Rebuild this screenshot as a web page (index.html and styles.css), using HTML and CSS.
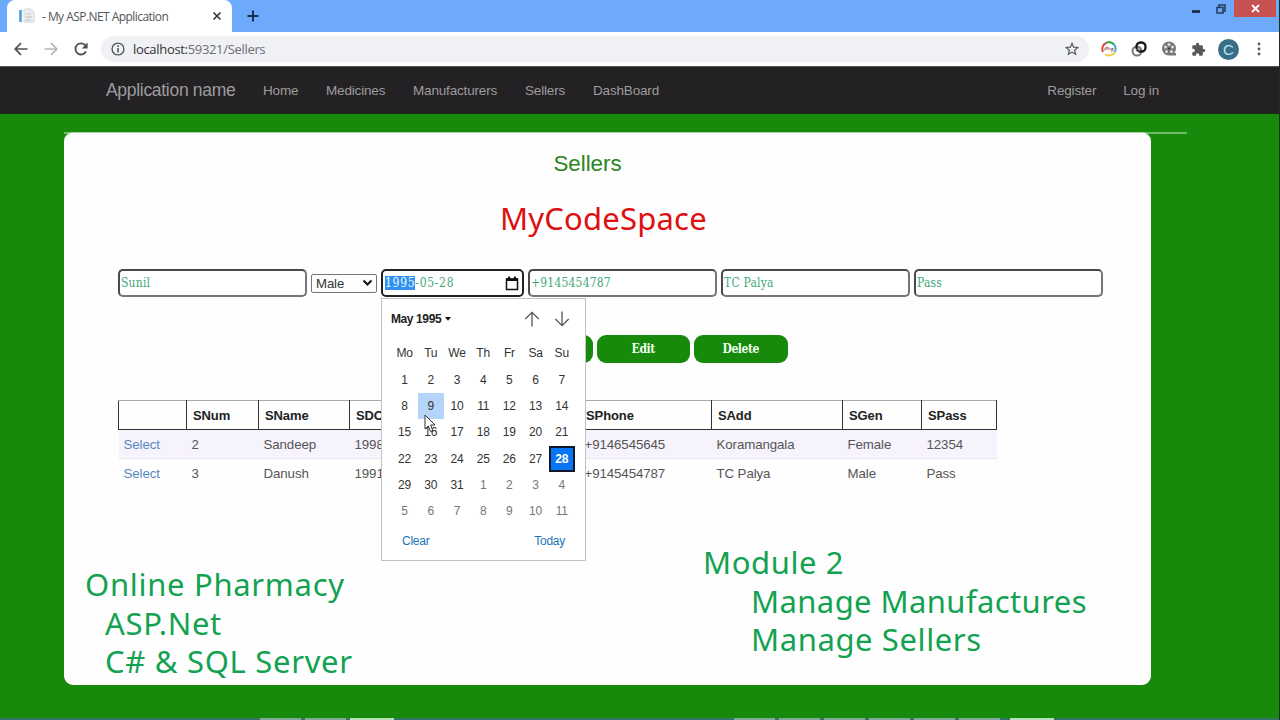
FILE: index.html
```html
<!DOCTYPE html>
<html lang="en">
	<head>
		<meta charset="UTF-8" />
		<title> - My ASP.NET Application</title>
		<link rel="stylesheet" href="styles.css">
	</head>
	<body>
		<div class="tabstrip">
			<div class="tab">
				<svg class="favicon" width="16" height="16" viewBox="0 0 16 16">
					<path d="M1.5 2v12" stroke="#3f9fd0" stroke-width="2.5" />
					<path d="M6 1h6l3 3v10H5V1" fill="#eceff1" stroke="#cfd6da" />
					<path d="M7 6h5M7 9h6M7 12h5" stroke="#b9c1c6" />
				</svg>
				<span class="tabtitle">- My ASP.NET Application</span>
				<svg width="10" height="10" viewBox="0 0 10 10"><path d="M1.5 1.5l7 7M8.5 1.5l-7 7" stroke="#333" stroke-width="1.6" /></svg>
			</div>
			<svg class="newtab" width="12" height="12" viewBox="0 0 12 12"><path d="M6 .5v11M.5 6h11" stroke="#1c2e45" stroke-width="2" /></svg>
			<div class="winbuttons">
				<svg class="winmin" width="8" height="3" viewBox="0 0 8 3"><path d="M0 1.5h8" stroke="#14263c" stroke-width="2.6" /></svg>
				<svg class="winmax" width="10" height="10" viewBox="0 0 10 10" fill="none" stroke="#243a58" stroke-width="1.5"><path d="M1 3.5h6v5.5H1zM3 3V1h6v6H7.500" /></svg>
				<div class="winclose"><svg width="9" height="9" viewBox="0 0 9 9"><path d="M1 1l7 7M8 1L1 8" stroke="#fff" stroke-width="1.8" /></svg></div>
			</div>
		</div>

		<div class="toolbar">
			<svg class="back" width="14" height="14" viewBox="0 0 14 14" fill="none" stroke="#4e5054" stroke-width="1.7"><path d="M13.500 7H1.500M7 1.200L1.200 7 7 12.800" /></svg>
			<svg class="forward" width="14" height="14" viewBox="0 0 14 14" fill="none" stroke="#b5b6b8" stroke-width="1.7"><path d="M.5 7h12M7 1.200L12.800 7 7 12.800" /></svg>
			<svg class="reload" width="14" height="14" viewBox="0 0 14 14"><path d="M12 9.500A5.600 5.600 0 1 1 11.500 3.500" fill="none" stroke="#4e5054" stroke-width="1.8" /><path d="M13.600.5v6H7.800z" fill="#4e5054" /></svg>
			<div class="address">
				<svg width="14" height="14" viewBox="0 0 14 14" fill="none" stroke="#55585c"><circle cx="7" cy="7" r="5.900" stroke-width="1.400" /><path d="M7 6v4.500M7 3.300v1.600" stroke-width="1.600" /></svg>
				<span class="url">localhost:<span>59321/Sellers</span></span>
				<svg width="14" height="14" viewBox="0 0 14 14"><path d="M7 1.300l1.600 3.900 4.200.3-3.200 2.700 1 4.100L7 10.100l-3.600 2.200 1-4.100L1.200 5.500l4.200-.3z" fill="none" stroke="#55585c" stroke-width="1.200" /></svg>
			</div>
			<div class="extensions">
				<svg width="16" height="16" viewBox="0 0 16 16" fill="none" stroke-width="2">
					<path d="M2 11A6.700 6.700 0 0 1 5 2" stroke="#df4545" />
					<path d="M5 2a6.700 6.700 0 0 1 8 1.500" stroke="#36a558" />
					<path d="M13 3.500a6.700 6.700 0 0 1 .8 7.500" stroke="#45a9e2" />
					<path d="M13.800 11A6.700 6.700 0 0 1 4 13.300" stroke="#f4cf42" />
					<path d="M4 9.500V7q1.500-1 2 0v2M6 7q2-1 2 0v2M10 7v2l2-2v2.500l-2 1" stroke="#a46568" stroke-width="1" />
				</svg>
				<svg width="16" height="16" viewBox="0 0 16 16" fill="none">
					<circle cx="6" cy="10" r="4.500" stroke="#77797c" stroke-width="2" />
					<rect x="5.500" y="1.500" width="9" height="9" rx="4" stroke="#151515" stroke-width="2.300" />
					<circle cx="7" cy="9" r="1.500" stroke="#777" />
				</svg>
				<svg width="16" height="16" viewBox="0 0 16 16">
					<circle cx="8" cy="7.500" r="7" fill="#777" />
					<path d="M9 12h6v2.500H9z" fill="#777" />
					<g fill="#dcdcdc"><circle cx="8" cy="3.500" r="1.500" /><circle cx="4.500" cy="6" r="1.500" /><circle cx="5.500" cy="10.500" r="1.500" /><circle cx="10.500" cy="10.500" r="1.500" /><circle cx="11.500" cy="6" r="1.500" /></g>
					<circle cx="8" cy="7.500" r="1" fill="#333" />
				</svg>
				<svg width="15" height="15" viewBox="0 0 24 24"><path d="M20.500 11H19V7a2 2 0 0 0-2-2h-4V3.500a2.500 2.500 0 0 0-5 0V5H4a2 2 0 0 0-2 2v3.800h1.500a2.700 2.700 0 0 1 0 5.400H2V20a2 2 0 0 0 2 2h3.800v-1.500a2.700 2.700 0 0 1 5.400 0V22H17a2 2 0 0 0 2-2v-4h1.500a2.500 2.500 0 0 0 0-5z" fill="#55585c" /></svg>
				<div class="avatar">C</div>
				<svg class="dots" width="4" height="14" viewBox="0 0 4 14" fill="#55585c"><circle cx="2" cy="2" r="1.400" /><circle cx="2" cy="7" r="1.400" /><circle cx="2" cy="12" r="1.400" /></svg>
			</div>
		</div>

		<div class="navbar">
			<a class="brand">Application name</a>
			<a class="home">Home</a>
			<a class="medicines">Medicines</a>
			<a class="manufacturers">Manufacturers</a>
			<a class="sellers">Sellers</a>
			<a class="dashboard">DashBoard</a>
			<a class="register">Register</a>
			<a class="login">Log in</a>
		</div>

		<div class="page">
			<hr class="rule">
			<div class="card">
				<h1 class="heading">Sellers</h1>
				<div class="fields">
					<input type="text" class="box" value="Sunil">
					<div class="gender">Male<svg width="11" height="8" viewBox="0 0 11 8"><path d="M1.500 1.500l4 4 4-4" fill="none" stroke="#111" stroke-width="2" /></svg></div>
					<div class="datebox">
						<span class="datetext"><mark>1995</mark>-05-28</span>
						<svg width="14" height="15" viewBox="0 0 14 15"><path d="M1.500 3h11v10.500h-11z" fill="none" stroke="#111" stroke-width="1.500" /><path d="M1 2.500h12V5H1zM3 .5h2v2H3zM9 .5h2v2H9z" fill="#111" /></svg>
						<div class="calendar">
							<div class="calhead">
								<b>May 1995</b>
								<svg class="caret" width="6" height="4" viewBox="0 0 6 4"><path d="M0 0h6L3 3.800z" fill="#111" /></svg>
								<svg class="up" width="16" height="16" viewBox="0 0 16 16"><path d="M8 15.500V1.500M1.300 8L8 1.300 14.700 8" fill="none" stroke="#555" stroke-width="1.300" /></svg>
								<svg width="16" height="16" viewBox="0 0 16 16"><path d="M8 .5v14M1.300 8L8 14.700 14.700 8" fill="none" stroke="#555" stroke-width="1.300" /></svg>
							</div>
							<div class="days">
								<span>Mo</span><span>Tu</span><span>We</span><span>Th</span><span>Fr</span><span>Sa</span><span>Su</span>
								<span>1</span><span>2</span><span>3</span><span>4</span><span>5</span><span>6</span><span>7</span>
								<span>8</span><span class="hover">9</span><span>10</span><span>11</span><span>12</span><span>13</span><span>14</span>
								<span>15</span><span>16</span><span>17</span><span>18</span><span>19</span><span>20</span><span>21</span>
								<span>22</span><span>23</span><span>24</span><span>25</span><span>26</span><span>27</span><span class="picked">28</span>
								<span>29</span><span>30</span><span>31</span><span class="next">1</span><span class="next">2</span><span class="next">3</span><span class="next">4</span>
								<span class="next">5</span><span class="next">6</span><span class="next">7</span><span class="next">8</span><span class="next">9</span><span class="next">10</span><span class="next">11</span>
							</div>
							<div class="calfoot"><a>Clear</a><a>Today</a></div>
							<svg class="pointer" width="12" height="19" viewBox="0 0 12 19"><path d="M1 1v14l3.300-3 2.200 5.500 2.300-1L6.600 11H11z" fill="#fff" stroke="#333" /></svg>
						</div>
					</div>
					<input type="text" class="box" value="+9145454787">
					<input type="text" class="box" value="TC Palya">
					<input type="text" class="box" value="Pass">
				</div>
				<div class="buttons">
					<input type="button" class="button" value="Save">
					<input type="button" class="button" value="Edit">
					<input type="button" class="button" value="Delete">
				</div>
				<table class="grid">
					<colgroup><col class="c1"><col class="c2"><col class="c3"><col class="c4"><col class="c5"><col class="c6"><col class="c7"><col class="c8"></colgroup>
					<tr><th></th><th>SNum</th><th>SName</th><th>SDOB</th><th>SPhone</th><th>SAdd</th><th>SGen</th><th>SPass</th></tr>
					<tr class="odd"><td><a>Select</a></td><td>2</td><td>Sandeep</td><td>1998</td><td>+9146545645</td><td>Koramangala</td><td>Female</td><td>12354</td></tr>
					<tr><td><a>Select</a></td><td>3</td><td>Danush</td><td>1991</td><td>+9145454787</td><td>TC Palya</td><td>Male</td><td>Pass</td></tr>
				</table>

				<!-- captions over the page -->
				<div class="caption channel">MyCodeSpace</div>
				<div class="caption project">
					<div class="cap1">Online Pharmacy</div>
					<div class="cap2">ASP.Net</div>
					<div class="cap3">C# &amp; SQL Server</div>
				</div>
				<div class="caption module">
					<div class="cap4">Module 2</div>
					<div class="cap5">Manage Manufactures</div>
					<div class="cap6">Manage Sellers</div>
				</div>
			</div>
		</div>
		<div class="taskbar">
			<i></i><i></i><i class="light"></i>
			<i class="second"></i><i></i><i></i><i></i><i></i><i></i><i class="light last"></i>
		</div>
		<div class="edge"></div>
	</body>
</html>
```
FILE: styles.css
```css
* {
	box-sizing: border-box;
}

body {
	height: 720px;
	margin: 0;
	display: flex;
	flex-direction: column;
	position: relative;
	overflow: hidden;
	background-color: #178a0b;
	font-family: "Liberation Sans", Arial, sans-serif;
	color: #333;
}

svg {
	display: block;
	flex: none;
}

/* browser */
.tabstrip {
	height: 32px;
	display: flex;
	background-color: #6eaafb;
	padding-left: 7px;
}

.tab {
	width: 225px;
	display: flex;
	align-items: center;
	padding: 0 10px 0 12px;
	background-color: #fff;
	border-radius: 8px 8px 0 0;
}

.tabtitle {
	flex: 1;
	margin-left: 7px;
	font: 12px "Open Sans", sans-serif;
	letter-spacing: -0.55px;
	color: #555;
	white-space: nowrap;
}

.newtab {
	margin: 10px 0 0 15px;
}

.winbuttons {
	display: flex;
	margin-left: auto;
}

.winmin {
	margin: 10px 16px 0 0;
}

.winmax {
	margin: 4px 8px 0 0;
}

.winclose {
	width: 42px;
	height: 17px;
	margin-right: 4px;
	display: flex;
	justify-content: center;
	align-items: center;
	background-color: #c75050;
}

.toolbar {
	height: 34px;
	display: flex;
	align-items: center;
	padding: 0 19px 0 14px;
	background-color: #fff;
}

.forward {
	margin-left: 16px;
}

.reload {
	margin-left: 16px;
}

.address {
	flex: 1;
	height: 26px;
	display: flex;
	align-items: center;
	margin-left: 13px;
	padding: 0 10px;
	border-radius: 13px;
	background-color: #f0f1f4;
}

.url {
	flex: 1;
	margin-left: 8px;
	font: 13px "Open Sans", sans-serif;
	letter-spacing: -0.32px;
	color: #333;
}

.url span {
	color: #6b6e72;
}

.extensions {
	display: flex;
	align-items: center;
	gap: 14px;
	margin-left: 12px;
}

.avatar {
	width: 21px;
	height: 21px;
	margin-left: -2px;
	border-radius: 50%;
	background-color: #386f86;
	color: #b9e4f0;
	font-size: 15px;
	line-height: 21px;
	text-align: center;
}

.dots {
	margin-left: 4px;
}

/* site menu */
.navbar {
	height: 48px;
	display: flex;
	align-items: center;
	padding: 0 121px 0 106px;
	background-color: #242124;
	border-top: 1px solid #555;
	border-bottom: 1px solid #172b15;
	font-size: 13.5px;
	letter-spacing: -0.17px;
	color: #9d9d9d;
}

.brand {
	width: 157px;
	font-size: 17.5px;
	letter-spacing: -0.3px;
}

.home {
	width: 63px;
}

.medicines {
	width: 87px;
}

.manufacturers {
	width: 112px;
}

.sellers {
	width: 68px;
}

.register {
	margin-left: auto;
	margin-right: 27px;
}

.page {
	flex: 1;
	padding: 18px 0 0 64px;
}

.rule {
	width: 1123px;
	height: 2px;
	margin: 0 0 -2px;
	border: 0;
	background-color: #6fba68;
}

.card {
	position: relative;
	width: 1087px;
	height: 553px;
	padding: 18px 47px 0 54px;
	border-top: 1px solid #a5d3a1;
	border-radius: 9px;
	background-color: #fefefe;
}

.heading {
	margin: 0 0 0 -54px;
	padding-right: 39px;
	width: 1086px;
	font-size: 22.3px;
	font-weight: normal;
	line-height: 26px;
	text-align: center;
	color: #2b8520;
}

.fields {
	display: flex;
	align-items: center;
	gap: 4px;
	margin-top: 92px;
}

.box,
.datebox {
	width: 189px;
	height: 28px;
	border: 2px solid;
	border-color: #4a484b #77757a #77757a #4a484b;
	border-radius: 5px;
	padding: 0 1px;
	background-color: #fff;
	font: 12px "DejaVu Serif Condensed", "DejaVu Serif", serif;
	letter-spacing: 0.2px;
	color: #42a878;
}

.gender {
	width: 66px;
	height: 19px;
	display: flex;
	align-items: center;
	justify-content: space-between;
	padding: 0 3px 0 4px;
	border: 1px solid #777;
	border-radius: 2px;
	font-size: 13.2px;
	letter-spacing: -0.1px;
	color: #333;
}

.datebox {
	position: relative;
	width: 143px;
	display: flex;
	align-items: center;
	justify-content: space-between;
	padding: 0 3px 0 2px;
	border-color: #222;
}

.datetext {
	letter-spacing: 0.7px;
}

.datebox mark {
	background-color: #3390f5;
	color: #e6fff5;
}

.calendar {
	position: absolute;
	left: -2px;
	top: 27px;
	z-index: 2;
	width: 205px;
	height: 263px;
	padding: 10px 9px 0;
	border: 1px solid #c2c2c2;
	background-color: #fff;
	font: 12px "Liberation Sans", Arial, sans-serif;
	letter-spacing: 0;
	color: #333;
}

.calhead {
	height: 20px;
	display: flex;
	align-items: center;
	padding-right: 6px;
	color: #222;
}

.calhead b {
	letter-spacing: -0.4px;
}

.caret {
	margin-left: 4px;
}

.up {
	margin-left: auto;
	margin-right: 14px;
}

.days {
	display: grid;
	grid-template-columns: repeat(7, 26.2px);
	grid-template-rows: 28px repeat(6, 26.2px);
	margin: 10px 0 0 0.5px;
	letter-spacing: -0.2px;
}

.days span {
	display: flex;
	align-items: center;
	justify-content: center;
}

.days .hover {
	background-color: #b5d4fa;
}

.days .picked {
	border: 2px solid #10172b;
	background-color: #0875f5;
	color: #fff;
	font-weight: bold;
}

.days .next {
	color: #777;
}

.calfoot {
	display: flex;
	justify-content: space-between;
	margin-top: 10px;
	padding: 0 11px;
	letter-spacing: -0.25px;
	color: #1a73b8;
}

.pointer {
	position: absolute;
	left: 42px;
	top: 115px;
}

.buttons {
	display: flex;
	gap: 4px;
	margin: 38px 0 0 381px;
}

.button {
	width: 93.5px;
	height: 28px;
	padding: 0;
	border: 0;
	border-radius: 9px;
	background-color: #178a0b;
	color: #f0fff0;
	font: bold 12px "DejaVu Serif Condensed", "DejaVu Serif", serif;
	letter-spacing: -0.4px;
}

.grid {
	width: 878px;
	margin-top: 37px;
	border-collapse: collapse;
	table-layout: fixed;
	font-size: 13.3px;
	letter-spacing: -0.1px;
}

.grid tr {
	height: 29.2px;
}

.grid th {
	height: 29px;
	padding: 0 5px 0 6px;
	border: 1px solid #333;
	border-width: 1px 1.5px 1px 1px;
	border-top-color: #aaa;
	text-align: left;
	font-size: 13px;
	letter-spacing: -0.1px;
	color: #222;
}

.grid td {
	padding: 0 5px;
	color: #555;
}

.odd {
	background-color: #f6f3fc;
	border-bottom: 1px solid #eae8ed;
}

.grid a {
	color: #5688c2;
}

.c1 { width: 68px; }
.c2 { width: 72px; }
.c3 { width: 91px; }
.c4 { width: 230px; }
.c5 { width: 132px; }
.c6 { width: 131px; }
.c7 { width: 79px; }
.c8 { width: 75px; }

.caption {
	position: absolute;
	font: 31px/38.5px "Noto Sans", sans-serif;
	white-space: nowrap;
	color: #12a251;
}

.channel {
	left: 436px;
	top: 66px;
	letter-spacing: 0.2px;
	color: #df1010;
}

.project {
	left: 21px;
	top: 432px;
	letter-spacing: 0.7px;
}

.cap2,
.cap3 {
	margin-left: 20px;
}

.module {
	left: 639px;
	top: 410px;
	letter-spacing: 0.6px;
}

.cap5,
.cap6 {
	margin-left: 48px;
}

.cap5 {
	letter-spacing: 0.4px;
}

.taskbar {
	height: 2px;
	display: flex;
	gap: 4px;
	padding-left: 260px;
	background-color: #347568;
}

.taskbar i {
	width: 41px;
	height: 2px;
	background-color: #80a99c;
}

.taskbar .light {
	width: 44px;
	background-color: #b7e1b9;
}

.taskbar .second {
	margin-left: 336px;
}

.taskbar .last {
	margin-left: 6px;
}

.edge {
	position: absolute;
	right: 0;
	top: 0;
	width: 1px;
	height: 720px;
	background-color: #173018;
}
```
